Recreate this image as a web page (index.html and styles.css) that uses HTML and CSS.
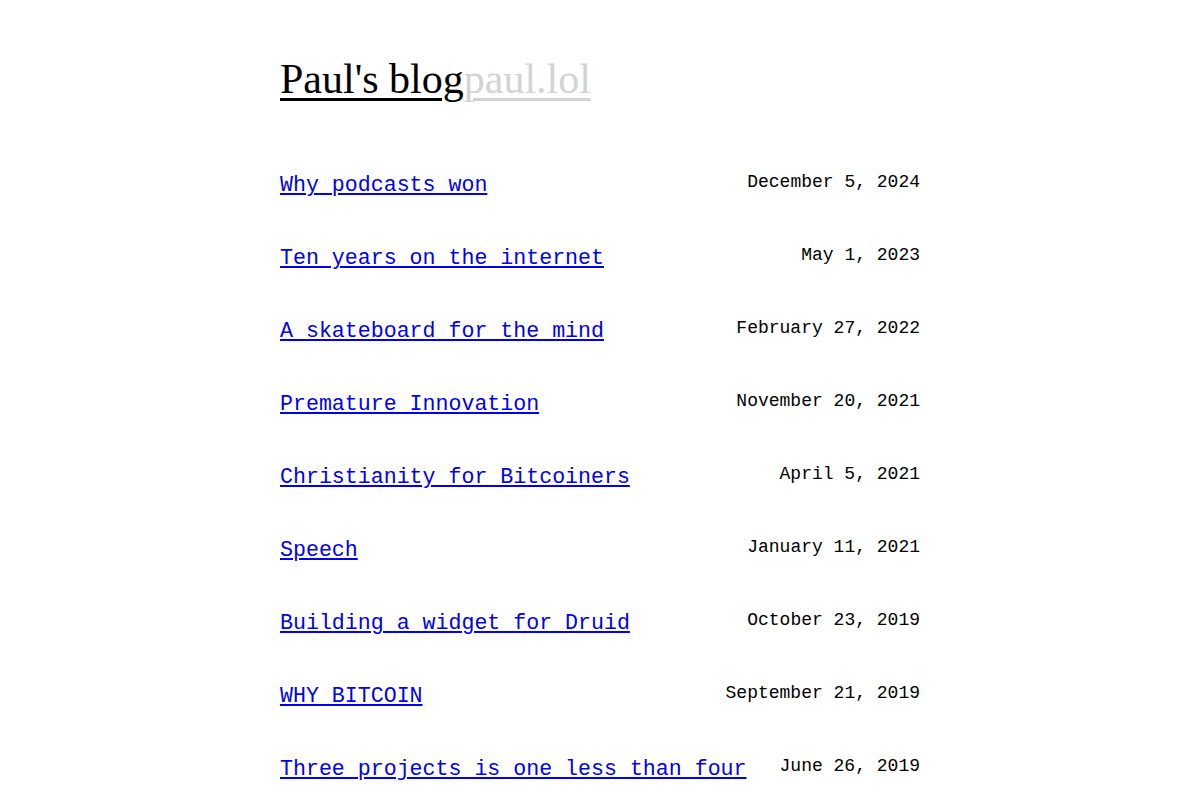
FILE: index.html
```html
<!DOCTYPE html>
<html>
<head>
<meta charset="utf-8">
<title>Paul's blog</title>
<link rel="stylesheet" href="styles.css">
</head>
<body>
<main class="page">
  <h1 class="title"><a class="title-main" href="#">Paul's blog</a><a class="title-sub" href="#">paul.lol</a></h1>
  <ul class="posts">
    <li class="post"><a class="post-link" href="#">Why podcasts won</a><span class="post-date">December 5, 2024</span></li>
    <li class="post"><a class="post-link" href="#">Ten years on the internet</a><span class="post-date">May 1, 2023</span></li>
    <li class="post"><a class="post-link" href="#">A skateboard for the mind</a><span class="post-date">February 27, 2022</span></li>
    <li class="post"><a class="post-link" href="#">Premature Innovation</a><span class="post-date">November 20, 2021</span></li>
    <li class="post"><a class="post-link" href="#">Christianity for Bitcoiners</a><span class="post-date">April 5, 2021</span></li>
    <li class="post"><a class="post-link" href="#">Speech</a><span class="post-date">January 11, 2021</span></li>
    <li class="post"><a class="post-link" href="#">Building a widget for Druid</a><span class="post-date">October 23, 2019</span></li>
    <li class="post"><a class="post-link" href="#">WHY BITCOIN</a><span class="post-date">September 21, 2019</span></li>
    <li class="post"><a class="post-link" href="#">Three projects is one less than four</a><span class="post-date">June 26, 2019</span></li>
  </ul>
</main>
</body>
</html>
```
FILE: styles.css
```css
html, body {
  margin: 0;
  padding: 0;
  background: #fff;
}
.page {
  width: 640px;
  margin: 0 auto;
  padding-top: 55px;
}
.title {
  margin: 0 0 70px 0;
  font-family: "Liberation Serif", "DejaVu Serif", serif;
  font-size: 42px;
  font-weight: normal;
  line-height: normal;
}
.title-main,
.title-sub {
  text-decoration-thickness: 3px;
  text-underline-offset: 5px;
}
.title-main {
  color: #000;
}
.title-sub {
  color: #d3d3d3;
}
.posts {
  list-style: none;
  margin: 0;
  padding: 0;
  display: flex;
  flex-direction: column;
  gap: 49px;
}
.post {
  display: flex;
  justify-content: space-between;
  align-items: flex-start;
  gap: 20px;
  font-family: "Liberation Mono", "DejaVu Sans Mono", monospace;
}
.post-link {
  font-size: 21.6px;
  line-height: normal;
  color: #0000ee;
}
.post-date {
  font-size: 18px;
  line-height: 19.4px;
  color: #000;
  white-space: nowrap;
}
```
